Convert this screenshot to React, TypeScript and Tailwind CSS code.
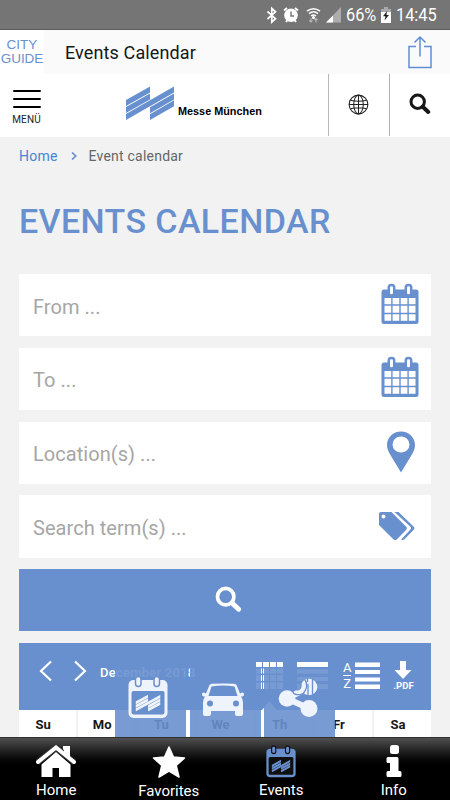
import type { ReactNode } from 'react';

const WEEKDAYS = ['Su', 'Mo', 'Tu', 'We', 'Th', 'Fr', 'Sa'];

function StatusBar() {
  return (
    <div className="flex h-[30px] items-center border-b border-[#5c5c5c] bg-[#757575] pl-[266px] text-white">
      <svg className="h-[18px] w-[12px] shrink-0" viewBox="0 0 12 18" fill="none" stroke="white" strokeWidth="1.7">
        <path d="M1.500 5.500l8 7.200-3.700 3.400V2.500l3.700 3.300-8 7.200" />
      </svg>
      <svg className="ml-[5px] h-[18px] w-[16px] shrink-0" viewBox="0 0 16 18">
        <circle cx="8" cy="9.300" r="6.800" fill="white" />
        <path d="M1 4.500L4 2M15 4.500L12 2M3 16l1.500-2M13 16l-1.500-2" stroke="white" strokeWidth="1.900" />
        <path d="M8 5.500V10h3" fill="none" stroke="#757575" strokeWidth="1.400" />
      </svg>
      <svg className="ml-[7px] h-[18px] w-[15px] shrink-0" viewBox="0 0 15 18" fill="none" stroke="white" strokeWidth="1.500">
        <path d="M1 5.200q6.500-5 13 0M3 7.600q4.500-3.500 9 0M5 10q2.500-2 5 0" />
        <circle cx="7.500" cy="11.500" r=".800" fill="white" />
        <path d="M5 12v4M3.300 14.500L5 16l1.500-1.500M10 16.500v-4M8.500 14L10 12.500l1.600 1.500" stroke="#b5b5b5" strokeWidth="1.200" />
      </svg>
      <svg className="ml-[4px] h-[18px] w-[16px] shrink-0" viewBox="0 0 16 18">
        <path d="M1 16.500L16 1v15.500z" fill="#adadad" />
        <path d="M1 16.500L8 9.500v7z" fill="white" />
      </svg>
      <span className="ml-[5px] w-[32px] origin-left scale-x-[.86] whitespace-nowrap text-[19px] leading-none">66%</span>
      <svg className="ml-[3px] h-[16px] w-[10px] shrink-0" viewBox="0 0 10 16">
        <path d="M3 0h4v2h3v14H0V2h3z" fill="white" />
        <path d="M3 0h4v2h3v3H0V2h3z" fill="#a9a9a9" />
        <path d="M6 4L2 9.300h2.500L3.500 13.500 8 8H5.500z" fill="#222" />
      </svg>
      <span className="ml-[5px] origin-left scale-x-[.86] whitespace-nowrap text-[19px] leading-none">14:45</span>
    </div>
  );
}

function TitleBar() {
  return (
    <div className="flex h-11 items-center bg-[#fafafa]">
      <div className="flex h-11 w-11 flex-col items-center justify-center bg-white font-['Liberation_Sans',sans-serif] text-[13.500px] leading-[14px] text-[#6990ce]">
        <span className="h-[14px]">CITY</span>
        <span className="h-[14px] tracking-[-0.100px]">GUIDE</span>
      </div>
      <h1 className="ml-[21px] text-[18px] tracking-[0.120px] text-[#161616]">Events Calendar</h1>
      <svg className="mr-[17px] ml-auto h-[34px] w-[26px]" viewBox="0 0 26 34" fill="none" stroke="#5f8fd6" strokeWidth="1.500">
        <path d="M9 11.500H2V32.500H24V11.500H17M13 21.500V2M7.500 7.500L13 2l5.500 5.500" />
      </svg>
    </div>
  );
}

interface MesseMarkProps {
  className?: string;
  fill: string;
  x?: number;
  y?: number;
  width?: number;
  height?: number;
}

// Slanted bars of the company mark, reused in the calendar icons
function MesseMark({ fill, ...rest }: MesseMarkProps) {
  return (
    <svg {...rest} viewBox="0 0 48 34" preserveAspectRatio="none" fill={fill}>
      <path d="M0 14L24 .500v6L0 20zM0 21L24 7.500v6L0 27zM0 28L48 .500v6L0 34zM24 21.300L48 7.500v6L24 27.300zM24 28.200L48 14.300v6L24 34z" />
    </svg>
  );
}

function SearchIcon({ className, stroke }: { className: string; stroke: string }) {
  return (
    <svg className={className} viewBox="0 0 24 24" fill="none" stroke={stroke}>
      <circle cx="9.500" cy="9.500" r="7.300" strokeWidth="3.300" />
      <path d="M15 15l6 5.700" strokeWidth="4.300" strokeLinecap="round" />
    </svg>
  );
}

function SiteHeader() {
  return (
    <header className="flex h-[63px] bg-white">
      <div className="flex w-[53px] flex-col items-center pt-4">
        <div className="flex w-7 flex-col gap-[5.500px]">
          <div className="h-[2.300px] rounded bg-black" />
          <div className="h-[2.300px] rounded bg-black" />
          <div className="h-[2.300px] rounded bg-black" />
        </div>
        <span className="mt-[5px] text-[10px] leading-[13px] tracking-[0.100px] text-[#222]">MENÜ</span>
      </div>
      <div className="flex flex-1 pt-3 pl-[73px]">
        <MesseMark className="h-[34px] w-12" fill="#6990ce" />
        <span className="mt-[18px] ml-1 origin-left scale-x-[.97] font-['Liberation_Sans',sans-serif] text-[11.200px] leading-[14px] font-bold whitespace-nowrap text-black">
          Messe München
        </span>
      </div>
      <div className="flex h-[62px] w-[61px] items-center justify-center border-l border-[#b8b8b8] pr-[1px] pb-[2px]">
        <svg className="h-[21px] w-[21px]" viewBox="0 0 22 22" fill="none" stroke="#222" strokeWidth="1.100">
          <circle cx="11" cy="11" r="9.800" />
          <ellipse cx="11" cy="11" rx="5" ry="9.800" />
          <path d="M11 1v20M1 11h20M2.500 6.500q8.500 2 17 0M2.500 15.500q8.500-2 17 0" />
        </svg>
      </div>
      <div className="flex h-[62px] w-[61px] items-center justify-center border-l border-[#b0b0b0] pb-[3px]">
        <SearchIcon className="h-[22px] w-[22px]" stroke="#171717" />
      </div>
    </header>
  );
}

function CalendarIcon() {
  return (
    <svg className="mb-[3px] h-[42px] w-[38px]" viewBox="0 0 38 42">
      <rect x=".500" y="6.500" width="37" height="34.500" rx="2.500" fill="#6990ce" />
      <path
        d="M3.500 15h6.700v6.200H3.500zM11.600 15h6.700v6.200h-6.700zM19.700 15h6.700v6.200h-6.700zM27.800 15h6.700v6.200h-6.700zM3.500 22.700h6.700v7H3.500zM11.600 22.700h6.700v7h-6.700zM19.700 22.700h6.700v7h-6.700zM27.800 22.700h6.700v7h-6.700zM3.500 31.200h6.700v6.500H3.500zM11.600 31.200h6.700v6.500h-6.700zM19.700 31.200h6.700v6.500h-6.700zM27.800 31.200h6.700v6.500h-6.700z"
        fill="white"
      />
      <rect x="7.800" y="2" width="5.400" height="10.500" rx="2.500" fill="white" stroke="#6990ce" strokeWidth="2.500" />
      <rect x="24.800" y="2" width="5.400" height="10.500" rx="2.500" fill="white" stroke="#6990ce" strokeWidth="2.500" />
    </svg>
  );
}

function PinIcon() {
  return (
    <svg className="mr-1 mb-[2px] h-[42px] w-7" viewBox="0 0 28 42" fill="#6990ce">
      <path fillRule="evenodd" d="M14 .500C6 .500 0 6.500 0 14c0 3 1 5.500 2.500 8.500L14 41.500l11.500-19C27 19.500 28 17 28 14 28 6.500 22 .500 14 .500zM14 5.500a8.500 8 0 1 1 0 16 8.500 8 0 1 1 0-16z" />
    </svg>
  );
}

function TagsIcon() {
  return (
    <svg className="mr-1 mb-px h-[30px] w-[37px]" viewBox="0 0 37 30" fill="#6990ce">
      <path fillRule="evenodd" d="M3 1h10.500L28 15.500c1.200 1.200 1.200 2.200 0 3.400l-9 9.300c-1.200 1.200-2.500 1.200-3.700 0L1 14V3c0-1.200.800-2 2-2zM5.500 3.500a2 2 0 1 0 0 4 2 2 0 0 0 0-4z" />
      <path d="M16.500 1h4L35.500 15.500c1.200 1.200 1.200 2.200 0 3.400l-9 9.300c-1 1-2.200 1-3.300.200l9-9.600c1-1.100 1-2 0-3.200z" />
    </svg>
  );
}

function Field({ placeholder, icon }: { placeholder: string; icon: ReactNode }) {
  return (
    <div className="flex h-[62.300px] items-center bg-white pr-3 pl-[14px]">
      <span className="mt-[3px] flex-1 text-[20px] tracking-[0.050px] text-[#a6a6a6]">{placeholder}</span>
      {icon}
    </div>
  );
}

function CalendarHeader() {
  return (
    <div className="flex h-[67px] bg-[#6990ce]">
      <svg className="mt-[17px] ml-5 h-[22px] w-[48px] shrink-0" viewBox="0 0 48 22" fill="none" stroke="white" strokeWidth="2.200">
        <path d="M12 1.500L2 11l10 9.500M36 1.500L46 11l-10 9.500" />
      </svg>
      <span className="mt-[21px] ml-[13px] w-[96px] text-[13px] leading-[18px] font-medium tracking-[0.250px] whitespace-nowrap text-white">
        December 2018
      </span>
      <svg className="mt-[19px] ml-[60px] h-[48px] w-[27px] shrink-0" viewBox="0 0 27 48" fill="white">
        <path d="M0 0h6v5H0zM7 0h6v5H7zM14 0h6v5h-6zM21 0h6v5h-6zM0 6.500h6v5H0zM7 6.500h6v5H7zM14 6.500h6v5h-6zM21 6.500h6v5h-6zM0 13h6v6H0zM7 13h6v6H7zM14 13h6v6h-6zM21 13h6v6h-6zM0 20.500h6v6.500H0zM7 20.500h6v6.500H7zM14 20.500h6v6.500h-6zM21 20.500h6v6.500h-6z" />
        <path d="M6 48l7.500-8.500L21 48z" />
      </svg>
      <svg className="mt-[19px] ml-[14px] h-[28px] w-[31px] shrink-0" viewBox="0 0 31 28" fill="white">
        <path d="M0 0h31v5H0zM0 7.500h31v4H0zM0 15h31v4H0zM0 22h31v5H0z" />
      </svg>
      <div className="mt-[18px] ml-[15px] flex flex-col items-center text-[13px] leading-[13px] text-white">
        <span>A</span>
        <div className="my-[1px] h-px w-2 bg-white" />
        <span>Z</span>
      </div>
      <svg className="mt-[19px] ml-[4px] h-[28px] w-[25px] shrink-0" viewBox="0 0 25 28" fill="white">
        <path d="M0 .500h25v4.500H0zM0 8h25v4H0zM0 15.500h25v4H0zM0 22.500h25v4.500H0z" />
      </svg>
      <div className="mt-[18px] ml-[12px] flex w-[22px] flex-col items-center text-white">
        <svg className="h-[18px] w-[18px]" viewBox="0 0 18 18" fill="white">
          <path d="M6 0h6v9h5.500L9 18 .500 9H6z" />
        </svg>
        <span className="mt-[1px] text-[9.500px] leading-[12px] font-bold">.PDF</span>
      </div>
    </div>
  );
}

function EventIcon({ className, color, hole }: { className: string; color: string; hole: string }) {
  return (
    <svg className={className} viewBox="0 0 40 42">
      <rect x=".500" y="4" width="39" height="38" rx="5" fill={color} />
      <rect x="3.500" y="15" width="33" height="23.500" rx="2" fill={hole} />
      <rect x="7.500" y=".500" width="5.500" height="10" rx="2.700" fill={color} stroke={hole} strokeWidth="1.500" />
      <rect x="26" y=".500" width="5.500" height="10" rx="2.700" fill={color} stroke={hole} strokeWidth="1.500" />
      <MesseMark x={7.5} y={18.5} width={25} height={17} fill={color} />
    </svg>
  );
}

function CarIcon() {
  return (
    <svg className="h-[34px] w-[42px]" viewBox="0 0 42 34">
      <path d="M7.500 2Q8 1 10 .800 21 0 32 .800q2 .200 2.500 1.200L38 10.500q4-2.500 4 1 0 2-3 2 2 2.500 2 6V31q0 2-2 2h-4q-2 0-2-2v-3H9v3q0 2-2 2H3q-2 0-2-2V19.500q0-3.500 2-6-3 0-3-2 0-3.500 4-1z" fill="#eff3fb" />
      <path d="M9.500 3.500Q21 1.500 32.500 3.500l3 9.500h-29z" fill="#6990ce" />
      <circle cx="8" cy="20.500" r="3" fill="#6990ce" />
      <circle cx="34" cy="20.500" r="3" fill="#6990ce" />
    </svg>
  );
}

function ShareIcon() {
  return (
    <svg className="h-[40px] w-[40px]" viewBox="0 0 40 40" fill="#eff3fb">
      <path d="M9 20.500L31 30.500M9 20.500L31 9" stroke="#eff3fb" strokeWidth="6" />
      <circle cx="9" cy="20.500" r="8.300" />
      <circle cx="31" cy="30.500" r="8.500" />
      <circle cx="31" cy="9" r="8.300" />
      <path d="M14 12.500q2.500 6.500 11 3M18.500 12q5 0 4.500-6M27 2q4.500 6-2.500 14.500" fill="none" stroke="#6990ce" strokeWidth="1.300" />
      <path d="M29.500 0v4M30 6v12M34.500 1v15.500" stroke="#6990ce" strokeWidth="1.300" />
    </svg>
  );
}

function QuickActions() {
  return (
    <div className="absolute bottom-[63px] left-[115px] flex h-[70px] gap-[4px]">
      <div className="flex w-[71px] justify-center bg-[#6990ce]/90 pt-[9px] pr-[5px]">
        <EventIcon className="h-[42px] w-[40px]" color="#eff3fb" hole="#6990ce" />
      </div>
      <div className="flex w-[71px] justify-center bg-[#6990ce]/90 pt-[16px] pr-[5px]">
        <CarIcon />
      </div>
      <div className="-ml-px flex w-[71px] justify-center bg-[#6990ce]/90 pt-[11px] pr-[4px]">
        <ShareIcon />
      </div>
    </div>
  );
}

function NavItem({ label, children }: { label: string; children: ReactNode }) {
  return (
    <div className="flex w-1/4 flex-col items-center pt-[7px]">
      <div className="flex h-[35px] items-center">{children}</div>
      <span className="mt-[2px] text-[15px] leading-[20px] text-white">{label}</span>
    </div>
  );
}

function BottomNav() {
  return (
    <nav className="flex h-[63px] border-t border-[#303030] bg-linear-to-b from-[#505050] from-0% via-black via-50% to-black">
      <NavItem label="Home">
        <svg className="h-[33px] w-[40px]" viewBox="0 0 40 33" fill="white">
          <path d="M27 1h7v10l-7-6zM5.500 19.500L20 7l14.500 12.500V32H23v-9h-6.500v9h-11z" />
          <path d="M1.500 17.500L20 2.500l18.500 15" fill="none" stroke="#333" strokeWidth="6" />
          <path d="M2 17L20 2.500 38 17" fill="none" stroke="white" strokeWidth="4" strokeLinecap="round" />
          <path d="M28 1h6v12l-6-5z" />
        </svg>
      </NavItem>
      <NavItem label="Favorites">
        <svg className="h-[34px] w-[34px]" viewBox="0 0 34 34" fill="white" stroke="white" strokeWidth="1.500" strokeLinejoin="round">
          <path d="M17 2l4.500 10L32.500 13l-8.300 7.500L27 32l-10-6-10 6 2.800-11.500L1.500 13l11-1z" />
        </svg>
      </NavItem>
      <NavItem label="Events">
        <EventIcon className="h-[33px] w-[30px]" color="#6990ce" hole="#101010" />
      </NavItem>
      <NavItem label="Info">
        <svg className="h-[33px] w-[16px]" viewBox="0 0 16 33" fill="white">
          <rect x="4" y="0" width="9" height="9" rx="2.500" />
          <path d="M2 12h9q1.500 0 1.500 1.500V26H14q1.500 0 1.500 1.500v3Q15.500 32 14 32H2Q.500 32 .500 30.500v-3Q.500 26 2 26h2v-8H2q-1.500 0-1.500-1.500v-3Q.500 12 2 12z" />
        </svg>
      </NavItem>
    </nav>
  );
}

export default function App() {
  return (
    <div className="relative flex h-[800px] w-[450px] flex-col overflow-hidden bg-[#f2f2f2] font-[Roboto,sans-serif]">
      <StatusBar />
      <TitleBar />
      <SiteHeader />

      <main className="flex-1 overflow-hidden px-[19px]">
        <div className="flex h-[38px] items-center text-[14px] tracking-[0.220px]">
          <span className="text-[#4585d2]">Home</span>
          <svg className="mr-[12px] ml-[13px] h-[8px] w-[6px]" viewBox="0 0 6 8" fill="none" stroke="#6990ce" strokeWidth="1.700">
            <path d="M1 .500L4.700 4 1 7.500" />
          </svg>
          <span className="text-[#666]">Event calendar</span>
        </div>
        <h2 className="mt-[24px] h-[75px] text-[34px] leading-[44px] font-medium tracking-[0.400px] whitespace-nowrap text-[#6990ce]">
          EVENTS CALENDAR
        </h2>

        <div className="flex flex-col gap-[11.500px]">
          <Field placeholder="From ..." icon={<CalendarIcon />} />
          <Field placeholder="To ..." icon={<CalendarIcon />} />
          <Field placeholder="Location(s) ..." icon={<PinIcon />} />
          <Field placeholder="Search term(s) ..." icon={<TagsIcon />} />
          <div className="flex h-[62.300px] items-center justify-center bg-[#6990ce] pb-[2px] pl-1.5">
            <SearchIcon className="h-[27px] w-[27px]" stroke="white" />
          </div>

          <div>
            <CalendarHeader />
            <div className="grid h-[40px] grid-cols-7 gap-[2px]">
              {WEEKDAYS.map((day) => (
                <div key={day} className="bg-white pt-[6px] pr-[9px] text-center text-[13px] leading-[18px] font-bold text-[#171717]">
                  {day}
                </div>
              ))}
            </div>
          </div>
        </div>
      </main>

      <BottomNav />
      <QuickActions />
    </div>
  );
}
